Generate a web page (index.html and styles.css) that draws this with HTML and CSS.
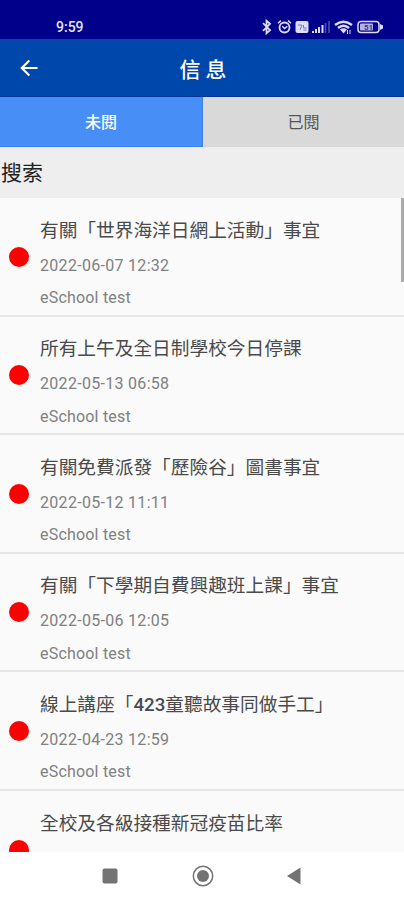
FILE: index.html
```
<!DOCTYPE html>
<html lang="zh-Hant">
<head>
<meta charset="utf-8">
<meta name="viewport" content="width=device-width, initial-scale=1">
<title>信息</title>
<link rel="stylesheet" href="styles.css">
</head>
<body>
<div class="phone">
 <!-- Status bar -->
 <div class="status">
  <span class="time">9:59</span>
  <svg class="status-icons" width="124" height="18" viewBox="0 0 124 18" fill="none" stroke="#dcdcff" stroke-width="1.5">
   <!-- bluetooth -->
   <path d="M3 5.2l7 7-3.500 3V2.800l3.500 3-7 7" stroke-width="1.800"/>
   <!-- alarm -->
   <circle cx="24.500" cy="9.500" r="5" stroke-width="1.800"/>
   <path d="M18 5.200l3-2.600M31 5.200l-3-2.600M22.300 8.300l2.200 2.200 2.800-2.200"/>
   <!-- sim badge -->
   <rect x="35.500" y="3" width="13" height="12" rx="2" fill="#dcdcff" stroke="none"/>
   <path d="M38 7h4l-2 5M43.500 7v3h3M43.500 12h3" stroke="#7777bd" stroke-width="1"/>
   <!-- signal -->
   <path d="M53 15v-2M56 15v-4M59 15V9M62.500 15V7" stroke-width="2"/>
   <path d="M65.500 15V5M69 15V3" stroke="#5151b4" stroke-width="1.500"/>
   <!-- wifi -->
   <path d="M75 7q8.500-6.500 17 0M78 10q5.500-4.500 11 0" stroke-width="2.500"/>
   <path d="M80 11.500q3.500-2.500 7 0L83.500 15.500z" fill="#dcdcff" stroke="none"/>
   <path d="M87.500 12v4M90 12v4" stroke-width="1"/>
   <!-- battery -->
   <rect x="98" y="3.500" width="21" height="11" rx="3"/>
   <rect x="100" y="5.500" width="13" height="7" rx="1" fill="#b5b5e2" stroke="none"/>
   <path d="M120 6l3 1.500v3L120 12z" fill="#dcdcff" stroke="none"/>
   <text class="battery-text" x="104" y="12">51</text>
  </svg>
 </div>

 <!-- Title bar -->
 <header class="topbar">
  <svg class="back" width="18" height="18" viewBox="0 0 18 18" fill="none" stroke="#fff" stroke-width="2.200">
   <path d="M17.500 9H2.500M9.300 1.500L1.800 9l7.500 7.500"/>
  </svg>
  <h1>信 息</h1>
 </header>

 <div class="tabs">
  <div class="tab active">未閱</div>
  <div class="tab">已閱</div>
 </div>

 <div class="search">搜索</div>

 <!-- Message list -->
 <div class="list">
  <div class="item">
   <span class="dot"></span>
   <div class="info">
    <div class="title">有關「世界海洋日網上活動」事宜</div>
    <div class="date">2022-06-07 12:32</div>
    <div class="sender">eSchool test</div>
   </div>
  </div>
  <div class="item">
   <span class="dot"></span>
   <div class="info">
    <div class="title">所有上午及全日制學校今日停課</div>
    <div class="date">2022-05-13 06:58</div>
    <div class="sender">eSchool test</div>
   </div>
  </div>
  <div class="item">
   <span class="dot"></span>
   <div class="info">
    <div class="title">有關免費派發「歷險谷」圖書事宜</div>
    <div class="date">2022-05-12 11:11</div>
    <div class="sender">eSchool test</div>
   </div>
  </div>
  <div class="item">
   <span class="dot"></span>
   <div class="info">
    <div class="title">有關「下學期自費興趣班上課」事宜</div>
    <div class="date">2022-05-06 12:05</div>
    <div class="sender">eSchool test</div>
   </div>
  </div>
  <div class="item">
   <span class="dot"></span>
   <div class="info">
    <div class="title">線上講座「<b>423</b>童聽故事同做手工」</div>
    <div class="date">2022-04-23 12:59</div>
    <div class="sender">eSchool test</div>
   </div>
  </div>
  <div class="item">
   <span class="dot"></span>
   <div class="info">
    <div class="title">全校及各級接種新冠疫苗比率</div>
    <div class="date">2022-04-21 12:22</div>
   </div>
  </div>
  <div class="scrollbar"></div>
 </div>

 <!-- System navigation -->
 <div class="navbar">
  <svg width="16" height="16" viewBox="0 0 16 16"><rect x=".5" y=".5" width="15" height="15" rx="2" fill="#737373"/></svg>
  <svg width="22" height="22" viewBox="0 0 22 22"><circle cx="11" cy="11" r="9.700" fill="none" stroke="#737373" stroke-width="1.500"/><circle cx="11" cy="11" r="6" fill="#737373"/></svg>
  <svg width="14" height="18" viewBox="0 0 14 18"><path d="M0 9L13.500.5v17z" fill="#737373"/></svg>
 </div>
</div>
</body>
</html>
```
FILE: styles.css
```
/* ---------- Base layout ---------- */
*{box-sizing:border-box}
body{margin:0;font-family:Roboto,"Noto Sans CJK TC",sans-serif;background:#fff;color:#555}
svg{display:block;flex:none}
.phone{width:404px;height:900px;display:flex;flex-direction:column;overflow:hidden}

/* ---------- Status bar ---------- */
.status{height:39px;flex:none;display:flex;justify-content:space-between;padding:18px 20px 0 56px;background:#00008b;color:#e6e6ff}
.time{font-size:14px;line-height:18px;font-weight:500}
.battery-text{font-size:8px;font-weight:700;fill:#33339c;stroke:none}

/* ---------- Title bar ---------- */
.topbar{height:58px;flex:none;display:flex;align-items:center;padding:0 20px;background:#0047ab;border-bottom:1px solid #003399;color:#fff}
.topbar h1{flex:1;margin:4px 16px 0 0;font-size:21px;line-height:30px;font-weight:500;text-align:center}

/* ---------- Tabs ---------- */
.tabs{height:50px;flex:none;display:flex}
.tab{flex:1;background:#d9d9d9;color:#555;font-size:16px;line-height:51px;text-align:center}
.tab.active{flex:0 0 203px;background:#478ff6;border-bottom:1px solid #3c80eb;border-right:1px solid #3c80eb;color:#fff;font-weight:500}

.search{height:51px;flex:none;padding:1px 0 0 1px;background:#eee;color:#222;font-size:21px;line-height:51px}

/* ---------- Message list ---------- */
.list{position:relative;height:654px;flex:none;overflow:hidden;background:#fafafa}
.item{height:118.6px;display:flex;align-items:flex-start;padding-left:9px;border-bottom:2px solid #e6e6e6}
.dot{width:20px;height:20px;flex:none;margin-top:48.7px;border-radius:50%;background:#f00}
.info{margin:18.6px 0 0 11px;white-space:nowrap}
.title{color:#4a4a4a;font-size:18.7px;line-height:28px}
.title b{font-weight:500}
.date,.sender{color:#808080;font-size:16px;line-height:24px}
.date{margin-top:9px;letter-spacing:.3px}
.sender{margin-top:8.5px;letter-spacing:.2px}
.scrollbar{position:absolute;top:0;right:0;width:3px;height:84px;background:#aaa}

/* ---------- System navigation ---------- */
.navbar{flex:1;display:flex;align-items:center;justify-content:space-between;padding:0 103px 0 102px;background:#fff}
```
